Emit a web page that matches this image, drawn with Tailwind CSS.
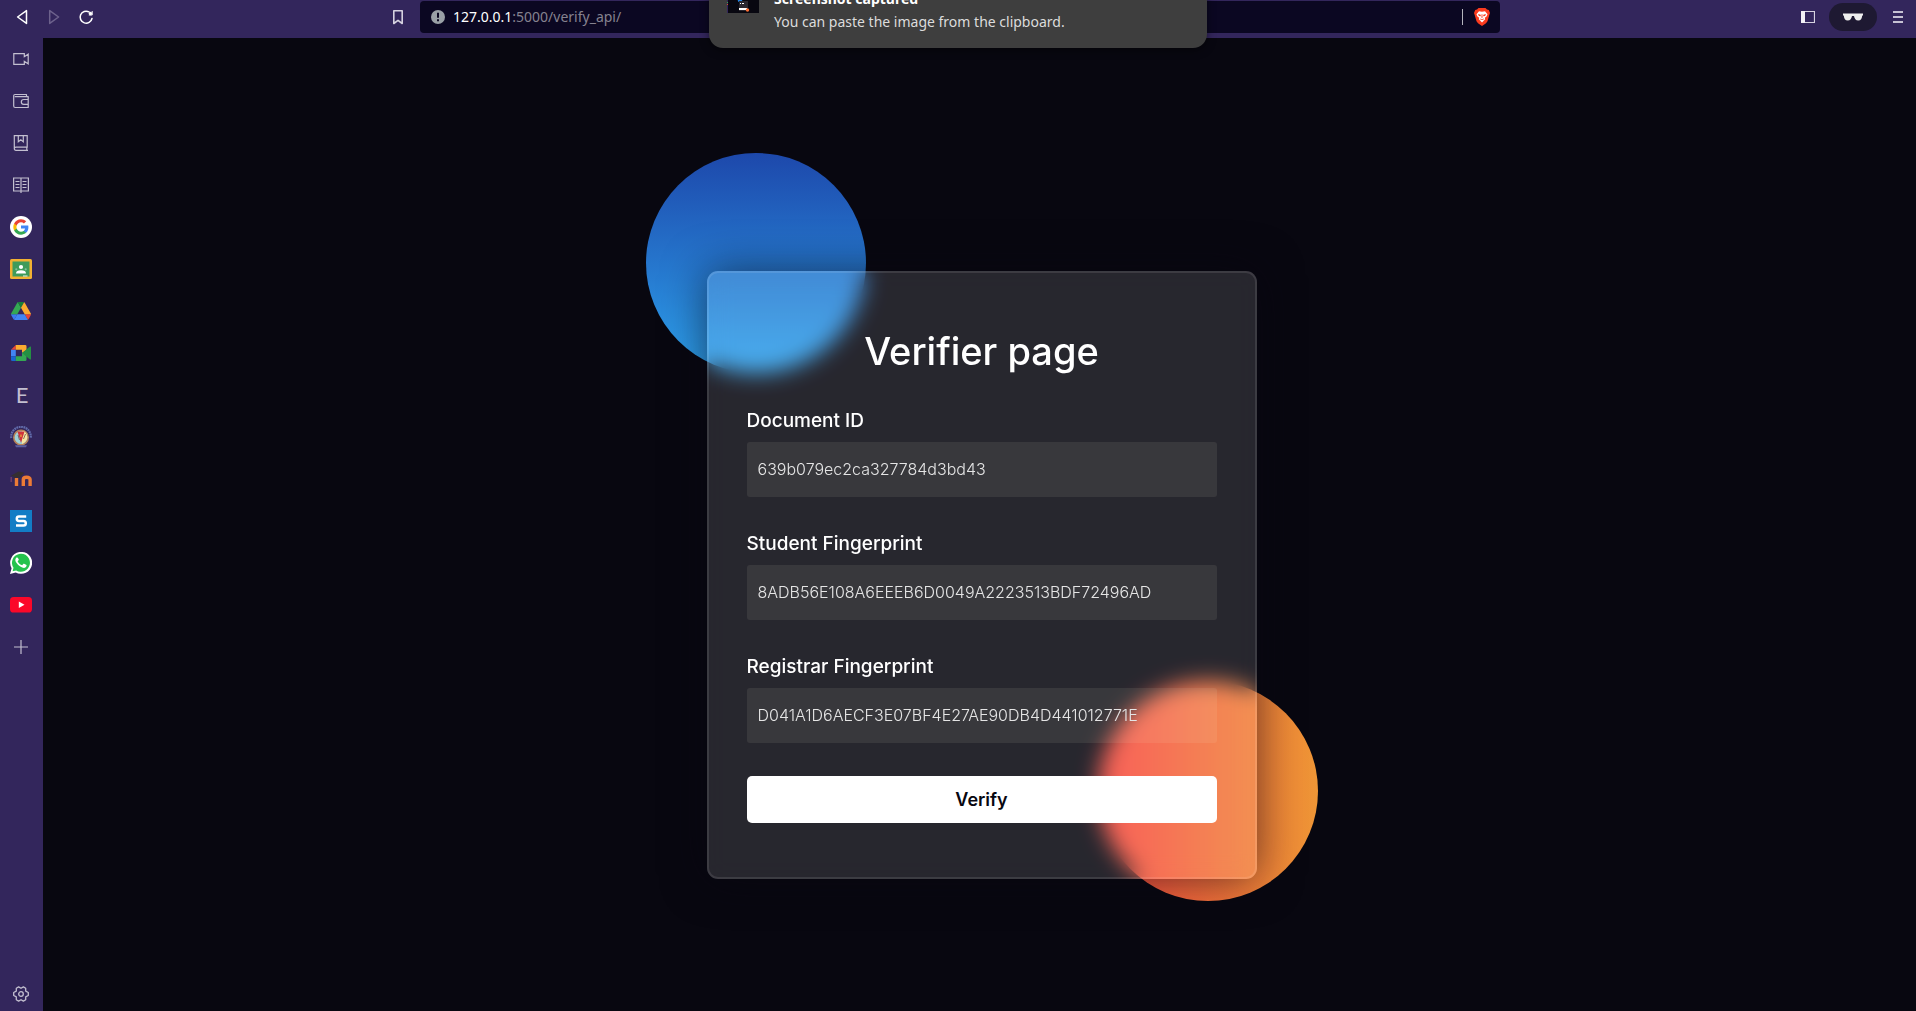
<!DOCTYPE html>
<html lang="en">
<head>
<meta charset="utf-8">
<title>Verifier page</title>
<script src="https://cdn.jsdelivr.net/npm/@tailwindcss/browser@4"></script>
</head>
<body class="flex min-h-screen flex-col overflow-x-hidden bg-[#080710] font-['Noto_Sans',sans-serif]">

<!-- Browser toolbar -->
<header class="flex h-[38px] items-start bg-[#33265c]">
  <div class="flex h-[34px] w-[390px] shrink-0 items-center gap-4 pl-[14px]">
    <button aria-label="Back" class="size-4"><svg viewBox="0 0 16 16" class="size-4 fill-none stroke-white" stroke-width="1.5" stroke-linejoin="round"><path d="M12.5 1.6v12.8L3.600 8z"/></svg></button>
    <button aria-label="Forward" class="size-4"><svg viewBox="0 0 16 16" class="size-4 fill-none stroke-[#6d628c]" stroke-width="1.5" stroke-linejoin="round"><path d="M3.700 1.600v12.800L12.600 8z"/></svg></button>
    <button aria-label="Reload" class="size-4"><svg viewBox="0 0 16 16" class="size-4 fill-none stroke-white" stroke-width="1.500" stroke-linecap="round"><path d="M14 9.500A6 6 0 1 1 11 2.900"/><circle cx="12.400" cy="4.500" r="1.700" class="fill-white stroke-none"/><path d="M14.200 2.500v3.500h-3" stroke-width="1"/></svg></button>
  </div>
  <div class="flex min-w-0 flex-1 items-center">
    <button aria-label="Bookmark" class="w-[30px] shrink-0"><svg viewBox="0 0 16 16" class="size-4 fill-none stroke-[#d6d2e0]" stroke-width="1.600" stroke-linejoin="round"><path d="M3.800 1.800h8.400v12.700L8 11.300l-4.200 3.200z"/></svg></button>
    <div class="mt-px flex h-8 min-w-0 flex-1 items-center rounded-sm bg-[#0b0722] pr-[10px] pl-[11px]">
      <svg viewBox="0 0 14 14" class="size-[14px] shrink-0"><circle cx="7" cy="7" r="7" fill="#9aa0a6"/><path d="M6 2.800h2v5H6zM6 9.200h2v2H6z" fill="#0b0722"/></svg>
      <a href="#" class="ml-2 text-[14px] leading-5 text-[#85828f]"><span class="text-white">127.0.0.1</span>:5000/verify_api/</a>
      <span class="ml-auto h-4 w-px bg-[#b5b4bd]"></span>
      <button aria-label="Shields" class="ml-[11px]"><svg viewBox="0 0 16 18" class="h-[18px] w-4"><path d="M4.500 0h7l1.500 1.600 1.800.3L16 5l-.7 2-1.800 6.200-1.500 2L8 18l-4-2.800-1.500-2L.7 7 0 5l1.200-3.100L3 1.600z" fill="#fb3b1e"/><path d="M5 3.200 8 3.700l3-.5 2.500 3-1 2.300-1.700 1.300.4 1.500L8 14.400l-3.200-3.100.4-1.500-1.700-1.300-1-2.300z" fill="#fff"/><path d="m4 6 2.600.8.3 1.400-2-.3zM12 6l-2.600.8-.3 1.400 2-.3zM6.300 10.300 8 11.500l1.700-1.200-.5 1.900L8 11.800l-1.200.4zM7.700 6h.6l.3 3.500L8 10l-.6-.5z" fill="#fb3b1e"/></svg></button>
    </div>
  </div>
  <div class="flex h-[34px] w-[416px] shrink-0 items-center justify-end gap-[14px] pr-[11px]">
    <button aria-label="Side panel"><svg viewBox="0 0 14 14" class="size-[14px]"><path d="M.5 1.500h13v11H.5z" fill="none" stroke="#d6d2e0" stroke-width="1.200"/><path d="M0 1h4v12H0z" fill="#f3f1f6"/></svg></button>
    <button aria-label="Private window" class="flex h-7 w-12 items-center justify-center rounded-full bg-[#1e1932]"><svg viewBox="0 0 20 8" class="h-2 w-5" fill="#eee"><path d="M0 .6h20v1.600l-.8.5C18.800 5.500 18 7.500 15.200 7.500c-2.500 0-3.700-2-4.200-4.500H9c-.5 2.500-1.700 4.500-4.200 4.500C2 7.500 1.200 5.500.8 2.700L0 2.200z"/></svg></button>
    <button aria-label="Menu" class="flex w-[14px] flex-col items-center gap-[3px]"><span class="h-[2px] w-[10px] bg-[#c6c1d3]"></span><span class="h-[2px] w-[10px] bg-[#c6c1d3]"></span><span class="h-[2px] w-[10px] bg-[#c6c1d3]"></span></button>
  </div>
</header>

<div class="flex flex-1">
  <!-- Sidebar -->
  <nav class="flex w-[43px] shrink-0 flex-col bg-[#33265c] pr-px">
    <a href="#" aria-label="Talk" class="flex h-[42px] items-center justify-center"><svg viewBox="0 0 16 16" class="size-4 fill-none stroke-[#c3bfd0]" stroke-width="1.200"><path d="M.8 2.700h10.500v3l3.900-2.500v9.600l-3.900-2.500v3H.8z"/></svg></a>
    <a href="#" aria-label="Wallet" class="flex h-[42px] items-center justify-center"><svg viewBox="0 0 16 16" class="size-4 fill-none stroke-[#c3bfd0]" stroke-width="1.200" stroke-linejoin="round"><path d="M13.500 3.600V1.500H2Q.7 1.500.7 2.700V13q0 1.500 1.500 1.500h13V3.600H1.800M15.200 6.500h-4.500Q8.300 6.500 8.300 8.900t2.400 2.400h4.500z"/></svg></a>
    <a href="#" aria-label="Bookmarks" class="flex h-[42px] items-center justify-center"><svg viewBox="0 0 16 16" class="size-4 fill-none stroke-[#c3bfd0]" stroke-width="1.200"><path d="M15 15.400H3Q1.300 15.400 1.300 13.600V.6h12.900v11.500H3q-1.700 0-1.700 1.600M13.800 12v3.400M5.300.6v6.100L7.800 4.800l2.500 1.900V.6"/></svg></a>
    <a href="#" aria-label="Reading list" class="flex h-[42px] items-center justify-center"><svg viewBox="0 0 16 16" class="size-4 fill-none stroke-[#c3bfd0]" stroke-width="1.200"><path d="M.6 1h14.800v13H.6zM8 1v15M2.500 4.500h4M2.500 7.500h4M2.500 10.500h4M9.500 4.500h4M9.500 7.500h4M9.500 10.500h4"/></svg></a>
    <a href="#" aria-label="Google" class="flex h-[42px] items-center justify-center"><svg viewBox="0 0 22 22" class="size-[22px]"><circle cx="11" cy="11" r="11" fill="#fff"/><g transform="translate(2.600 2.600) scale(.7)"><path fill="#4285F4" d="M22.560 12.250c0-.78-.07-1.530-.2-2.250H12v4.260h5.920c-.26 1.370-1.040 2.530-2.210 3.310v2.770h3.570c2.080-1.920 3.280-4.740 3.280-8.090z"/><path fill="#34A853" d="M12 23c2.970 0 5.460-.98 7.280-2.660l-3.570-2.770c-.98.66-2.230 1.060-3.710 1.060-2.860 0-5.290-1.930-6.160-4.530H2.180v2.840C3.990 20.530 7.700 23 12 23z"/><path fill="#FBBC05" d="M5.840 14.090A6.600 6.600 0 0 1 5.490 12c0-.73.13-1.430.35-2.090V7.070H2.180A11 11 0 0 0 1 12c0 1.780.43 3.450 1.180 4.930z"/><path fill="#EA4335" d="M12 5.380c1.620 0 3.060.56 4.210 1.640l3.150-3.150C17.450 2.090 14.970 1 12 1 7.700 1 3.990 3.470 2.180 7.070l3.660 2.840C6.710 7.310 9.140 5.380 12 5.380z"/></g></svg></a>
    <a href="#" aria-label="Classroom" class="flex h-[42px] items-center justify-center"><svg viewBox="0 0 22 20" class="h-5 w-[22px]"><rect width="22" height="20" rx="1.500" fill="#f2b132"/><path d="M2.500 2.500h17v15h-17z" fill="#3f9b5b"/><circle cx="11" cy="8" r="2.100" fill="#fff"/><path d="M6 14.500q0-3.200 5-3.200t5 3.200z" fill="#fff"/><circle cx="6.300" cy="10.300" r="1.100" fill="#7fc29a"/><circle cx="15.700" cy="10.300" r="1.100" fill="#7fc29a"/><path d="M13 16.500h4.500v1H13z" fill="#e8f3ec"/></svg></a>
    <a href="#" aria-label="Drive" class="flex h-[42px] items-center justify-center"><svg viewBox="0 0 87.300 78" class="h-[18px] w-5"><path d="m6.600 66.850 3.850 6.650c.8 1.400 1.950 2.500 3.300 3.300L27.500 53H0c0 1.550.4 3.100 1.200 4.500z" fill="#3b7bf0"/><path d="M43.650 25 29.900 1.200c-1.350.8-2.500 1.900-3.300 3.300L1.200 48.500A9 9 0 0 0 0 53h27.500z" fill="#34a853"/><path d="M73.550 76.800c1.350-.8 2.500-1.900 3.300-3.300l9.250-16c.8-1.400 1.200-2.950 1.200-4.500H59.800l5.850 11.500z" fill="#ea4335"/><path d="M43.650 25 57.400 1.200C56.050.4 54.500 0 52.900 0H34.400c-1.600 0-3.150.45-4.500 1.200z" fill="#188038"/><path d="M59.800 53H27.500L13.750 76.800c1.350.8 2.900 1.200 4.500 1.200h50.800c1.600 0 3.150-.45 4.500-1.200z" fill="#4285f4"/><path d="M73.400 26.500 60.700 4.500c-.8-1.400-1.950-2.500-3.300-3.300L43.650 25 59.800 53h27.450c0-1.550-.4-3.100-1.200-4.500z" fill="#fbab30"/></svg></a>
    <a href="#" aria-label="Meet" class="flex h-[42px] items-center justify-center"><svg viewBox="0 0 20 16" class="h-4 w-5"><path d="M4.800 0v4.800H0z" fill="#ea4335"/><path d="M0 4.800h4.800v6.400H0z" fill="#4285f4"/><path d="M0 11.200h4.800V16H1.300Q0 16 0 14.700z" fill="#1967d2"/><path d="M4.800 0h9.400Q15.500 0 15.500 1.300V5L11 8V4.800H4.800z" fill="#fbab30"/><path d="M4.800 11.200H11V8l4.500-2.500v9.200q0 1.300-1.300 1.300H4.800z" fill="#34a853"/><path d="M11 8 19 1.600q1-.6 1 .5v11.800q0 1.100-1 .5z" fill="#249043"/></svg></a>
    <a href="#" class="flex h-[42px] items-center justify-center pl-[2px] font-['Lato',sans-serif] text-[22px] leading-5 text-[#c3bfd0]">E</a>
    <a href="#" aria-label="University" class="flex h-[42px] items-center justify-center"><svg viewBox="0 0 22 22" class="size-[22px]"><path d="M1.300 12A9.800 9.800 0 1 1 20.700 12" fill="none" stroke="#626cab" stroke-width="2.200" stroke-dasharray="1.800 .6"/><circle cx="11" cy="11.500" r="7.200" fill="#9fd3d8" stroke="#b5835a" stroke-width="1.600"/><path d="M12 5h2q4 3 3 8-1 3-5 5z" fill="#f7e6a0"/><path d="M7.500 5.500h7L11 17z" fill="#d0333c"/><path d="M10.300 8.500h1.400v2.500h-1.400z" fill="#e9a13b"/><path d="M13.500 13l2-5M8 9l1.500 5" stroke="#6d4a4a" stroke-width=".8"/><path d="M5 19.300h12l-1 2H6z" fill="#5a5fa0"/></svg></a>
    <a href="#" aria-label="Moodle" class="flex h-[42px] items-center justify-center"><svg viewBox="0 0 22 16" class="h-4 w-[22px]"><path d="M6.500 15V7M13.300 15V8.500q0-2.200 3.400-2.200t3.400 2.200V15" fill="none" stroke="#ec7b36" stroke-width="3.400"/><path d="M1 4.800 8.500.5l6 1.200L11 5.500 9.500 7Q6 5.800 3.800 7.500L4 5.800z" fill="#352f31"/><path d="M1.200 6v5" stroke="#76406a" stroke-width="1.400"/></svg></a>
    <a href="#" aria-label="Scribe" class="flex h-[42px] items-center justify-center"><svg viewBox="0 0 22 22" class="size-[22px]"><path d="M0 0h22v22H0z" fill="#137dc5"/><path d="M16.200 6.500H9Q6.800 6.500 6.800 8.700T9 10.900h4.500q2.300 0 2.300 2.300t-2.300 2.300H6" fill="none" stroke="#fff" stroke-width="2.500"/></svg></a>
    <a href="#" aria-label="WhatsApp" class="flex h-[42px] items-center justify-center"><svg viewBox="0 0 22 22" class="size-[22px]"><path d="M0 22 1.600 16.300A11 11 0 1 1 5.700 20.400z" fill="#fff"/><path d="m2.600 19.300.9-3.500a9 9 0 1 1 2.700 2.600z" fill="#25c34d"/><path d="M7.700 5.800c-.5-.6-1-.5-1.500 0-1.400 1.500-1 3.400.4 5.300 1.800 2.600 3.900 4 6.400 4.700 1.800.5 3.400-.8 3.600-2.300.1-.5-.1-.6-.5-.8l-2-.9c-.4-.2-.6-.1-.9.2l-.8 1c-.2.3-.5.3-.8.1-1.800-.8-2.900-1.900-3.800-3.400-.2-.3-.1-.5.100-.7l.8-1c.1-.2.1-.4 0-.7z" fill="#fff"/></svg></a>
    <a href="#" aria-label="YouTube" class="flex h-[42px] items-center justify-center"><svg viewBox="0 0 22 16" class="h-4 w-[22px]"><rect width="22" height="15.500" rx="3.600" fill="#fb0829"/><path d="m8.800 4.600 5.700 3.200-5.700 3.200z" fill="#fff"/></svg></a>
    <button aria-label="Add" class="flex h-[42px] items-center justify-center"><svg viewBox="0 0 14 14" class="size-[14px] stroke-[#c3bfd0]" stroke-width="1.200"><path d="M7 0v14M0 7h14"/></svg></button>
    <button aria-label="Settings" class="mt-auto flex h-[34px] items-center justify-center"><svg viewBox="0 0 16 16" class="size-4 fill-none stroke-[#c3bfd0]" stroke-width="1.300" stroke-linejoin="round"><circle cx="8" cy="8" r="2.300"/><path d="M5.600.9 8 2.300 10.400.9l2.300 1.300v2.900L15.300 6.500v3l-2.600 1.400v2.900l-2.300 1.300L8 13.700l-2.400 1.400-2.300-1.300v-2.900L.7 9.500v-3l2.600-1.400V2.200z"/></svg></button>
  </nav>

  <!-- Page -->
  <main class="flex flex-1 items-center justify-center pt-1 pl-1">
    <div class="relative w-full max-w-[672px] px-[61px] pt-[118px] pb-[22px]">
      <div class="absolute top-0 left-0 size-[220px] rounded-full bg-linear-to-b/srgb from-[#1d48ab] to-[#2ea3ee]"></div>
      <div class="absolute right-0 bottom-0 size-[220px] rounded-full bg-linear-to-r/srgb from-[#f8473f] to-[#ee9636]"></div>
      <form class="relative flex flex-col rounded-[11px] border-2 border-white/10 bg-white/13 px-[38px] pt-[52px] pb-[54px] font-['Inter',sans-serif] text-white shadow-[0_0_44px_rgba(8,7,16,0.6)] backdrop-blur-[11px]">
        <h1 class="mb-[30px] text-center text-[38px] leading-[52px] font-medium">Verifier page</h1>
        <label for="doc" class="mb-[8px] text-[19px] leading-[27px] font-medium">Document ID</label>
        <input id="doc" type="text" value="639b079ec2ca327784d3bd43" class="mb-[33px] h-[55px] rounded-[3px] bg-[#f8ffd8]/8 px-[11px] text-[16px] font-light text-[#e5e5e5]">
        <label for="student" class="mb-[8px] text-[19px] leading-[27px] font-medium">Student Fingerprint</label>
        <input id="student" type="text" value="8ADB56E108A6EEEB6D0049A2223513BDF72496AD" class="mb-[33px] h-[55px] rounded-[3px] bg-[#f8ffd8]/8 px-[11px] text-[16px] font-light text-[#e5e5e5]">
        <label for="registrar" class="mb-[8px] text-[19px] leading-[27px] font-medium">Registrar Fingerprint</label>
        <input id="registrar" type="text" value="D041A1D6AECF3E07BF4E27AE90DB4D441012771E" class="mb-[33px] h-[55px] rounded-[3px] bg-[#f8ffd8]/8 px-[11px] text-[16px] font-light text-[#e5e5e5]">
        <button type="button" class="h-[47px] rounded-[5px] bg-white text-[18px] font-semibold text-[#080710]">Verify</button>
      </form>
    </div>
  </main>
</div>

<!-- Desktop notification sliding in from the top edge -->
<aside class="absolute inset-x-0 -top-9 mx-auto flex h-[84px] w-[498px] items-start gap-[15px] rounded-[14px] bg-[#3e3e3e] pt-[23px] pl-[18px] shadow-[0_2px_8px_rgba(0,0,0,0.5)]">
  <svg viewBox="0 0 32 26" class="h-[26px] w-8"><path d="M0 0h32v26H0z" fill="#080710"/><path d="M0 0h1v26H0z" fill="#33265c"/><path d="M0 15h1v1H0z" fill="#34a853"/><path d="M0 17h1v1H0z" fill="#ea4335"/><circle cx="13" cy="13" r="2.300" fill="#2383e0"/><path d="M12 14h9v10h-9z" fill="#29272f"/><path d="M13 16h1v1h-1zM15 16h2v1h-2zM12 21h8v2h-8z" fill="#fff"/><circle cx="20.500" cy="23" r="1.700" fill="#fb6f35"/></svg>
  <div class="text-[14px] leading-[23px] text-[#dcdcdc]">
    <p class="font-bold text-white">Screenshot captured</p>
    <p>You can paste the image from the clipboard.</p>
  </div>
</aside>
</body>
</html>
